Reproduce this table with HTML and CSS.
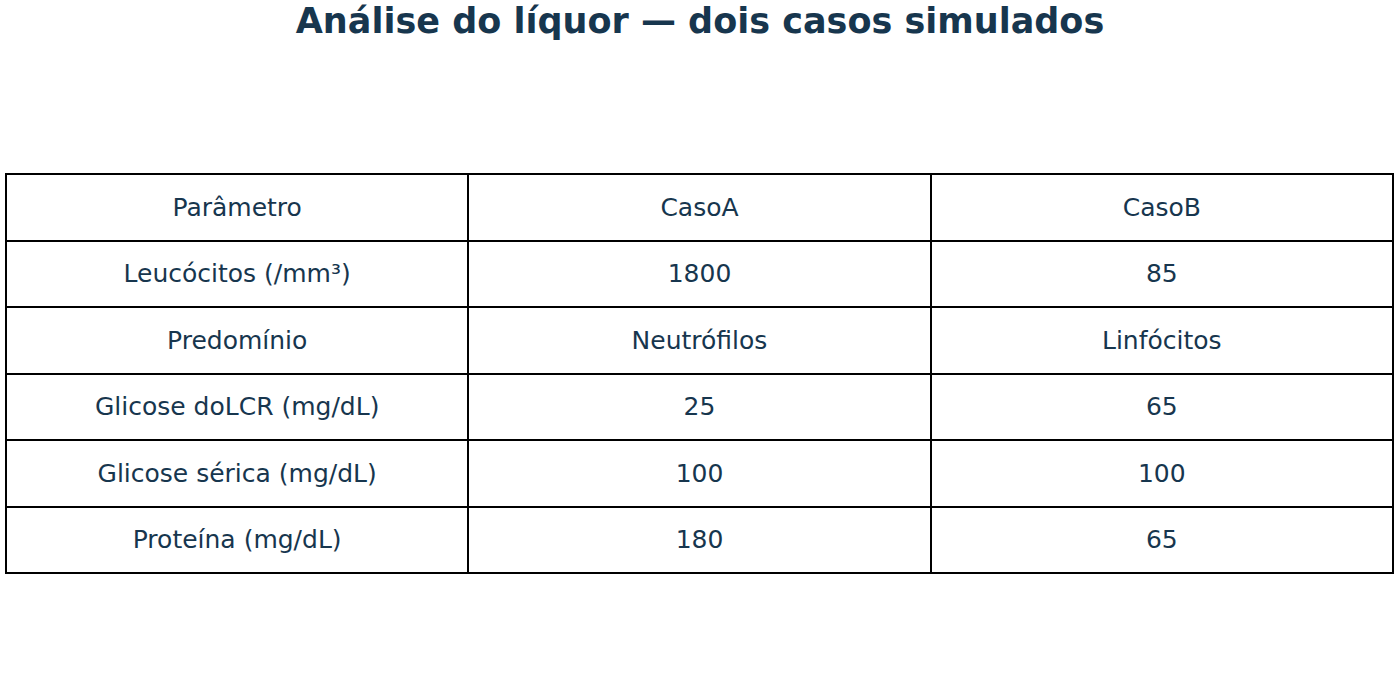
FILE: index.html
```html
<!DOCTYPE html>
<html lang="pt">
<head>
<meta charset="utf-8">
<title>Análise do líquor</title>
<link rel="stylesheet" href="styles.css">
</head>
<body>
<h1 class="title">Análise do líquor — dois casos simulados</h1>
<table class="data">
  <tr><td>Parâmetro</td><td>CasoA</td><td>CasoB</td></tr>
  <tr><td>Leucócitos (/mm³)</td><td>1800</td><td>85</td></tr>
  <tr><td>Predomínio</td><td>Neutrófilos</td><td>Linfócitos</td></tr>
  <tr><td>Glicose doLCR (mg/dL)</td><td>25</td><td>65</td></tr>
  <tr><td>Glicose sérica (mg/dL)</td><td>100</td><td>100</td></tr>
  <tr><td>Proteína (mg/dL)</td><td>180</td><td>65</td></tr>
</table>
</body>
</html>
```

FILE: styles.css
```css
html, body {
  margin: 0;
  padding: 0;
  background: #ffffff;
}
body {
  font-family: "DejaVu Sans", sans-serif;
  color: #17364e;
  width: 1400px;
  height: 700px;
}
.title {
  margin: 0;
  padding-top: 1px;
  font-size: 35px;
  font-weight: bold;
  line-height: 40px;
  text-align: center;
  height: 40px;
}
.data {
  margin: 132px 0 0 5px;
  width: 1389px;
  border-collapse: collapse;
  table-layout: fixed;
}
.data td {
  border: 2px solid #000;
  height: 66.5px;
  padding: 0;
  font-size: 25px;
  text-align: center;
  vertical-align: middle;
  box-sizing: border-box;
}
```
